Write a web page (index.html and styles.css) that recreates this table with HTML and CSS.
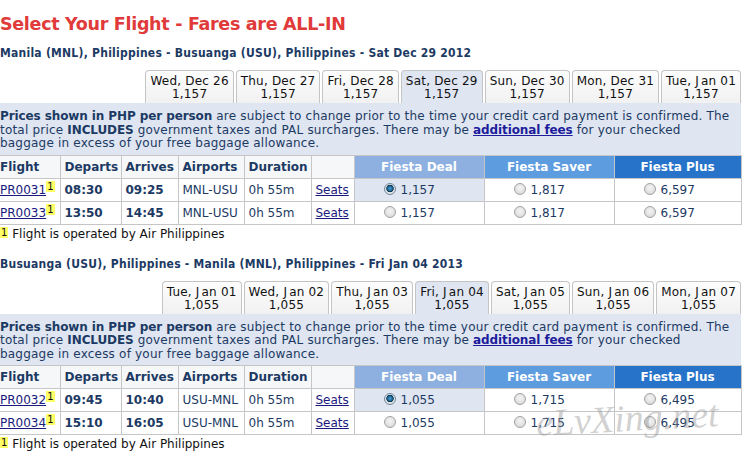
FILE: index.html
```html
<!DOCTYPE html>
<html>
<head>
<meta charset="utf-8">
<link rel="stylesheet" href="styles.css">
</head>
<body>
<div class="page">
  <h1 class="title">Select Your Flight - Fares are ALL-IN</h1>

  <section class="leg">
    <h2 class="route">Manila (MNL), Philippines - Busuanga (USU), Philippines - Sat Dec 29 2012</h2>
    <div class="tabs">
      <div class="tab"><span>Wed, Dec 26</span><span>1,157</span></div>
      <div class="tab"><span>Thu, Dec 27</span><span>1,157</span></div>
      <div class="tab"><span>Fri, Dec 28</span><span>1,157</span></div>
      <div class="tab tab-on"><span>Sat, Dec 29</span><span>1,157</span></div>
      <div class="tab"><span>Sun, Dec 30</span><span>1,157</span></div>
      <div class="tab"><span>Mon, Dec 31</span><span>1,157</span></div>
      <div class="tab"><span>Tue, <span class="j">J</span>an 01</span><span>1,157</span></div>
    </div>
    <div class="info"><b>Prices shown in PHP per person</b> are subject to change prior to the time your credit card payment is confirmed. The<br>total price <b>INCLUDES</b> government taxes and PAL surcharges. There may be <a class="fees" href="#">additional fees</a> for your checked<br>baggage in excess of your free baggage allowance.</div>
    <table class="flights">
      <colgroup>
        <col class="c-flight"><col class="c-dep"><col class="c-arr"><col class="c-apt"><col class="c-dur"><col class="c-seat"><col class="c-fare"><col class="c-fare"><col class="c-fare2">
      </colgroup>
      <thead>
        <tr>
          <th class="first">Flight</th><th>Departs</th><th>Arrives</th><th>Airports</th><th>Duration</th><th></th>
          <th class="fd">Fiesta Deal</th><th class="fs">Fiesta Saver</th><th class="fp">Fiesta Plus</th>
        </tr>
      </thead>
      <tbody>
        <tr>
          <td class="first"><a href="#">PR0031</a><sup class="op">1</sup></td><td class="time">08:30</td><td class="time">09:25</td><td>MNL-USU</td><td>0h 55m</td><td><a href="#">Seats</a></td>
          <td class="fare sel"><span class="radio on"></span>1,157</td><td class="fare"><span class="radio"></span>1,817</td><td class="fare"><span class="radio"></span>6,597</td>
        </tr>
        <tr>
          <td class="first"><a href="#">PR0033</a><sup class="op">1</sup></td><td class="time">13:50</td><td class="time">14:45</td><td>MNL-USU</td><td>0h 55m</td><td><a href="#">Seats</a></td>
          <td class="fare"><span class="radio"></span>1,157</td><td class="fare"><span class="radio"></span>1,817</td><td class="fare"><span class="radio"></span>6,597</td>
        </tr>
      </tbody>
    </table>
    <p class="note"><sup class="op">1</sup> Flight is operated by Air Philippines</p>
  </section>

  <section class="leg leg2">
    <h2 class="route">Busuanga (USU), Philippines - Manila (MNL), Philippines - Fri Jan 04 2013</h2>
    <div class="tabs">
      <div class="tab"><span>Tue, <span class="j">J</span>an 01</span><span>1,055</span></div>
      <div class="tab"><span>Wed, <span class="j">J</span>an 02</span><span>1,055</span></div>
      <div class="tab"><span>Thu, <span class="j">J</span>an 03</span><span>1,055</span></div>
      <div class="tab tab-on"><span>Fri, <span class="j">J</span>an 04</span><span>1,055</span></div>
      <div class="tab"><span>Sat, <span class="j">J</span>an 05</span><span>1,055</span></div>
      <div class="tab"><span>Sun, <span class="j">J</span>an 06</span><span>1,055</span></div>
      <div class="tab"><span>Mon, <span class="j">J</span>an 07</span><span>1,055</span></div>
    </div>
    <div class="info"><b>Prices shown in PHP per person</b> are subject to change prior to the time your credit card payment is confirmed. The<br>total price <b>INCLUDES</b> government taxes and PAL surcharges. There may be <a class="fees" href="#">additional fees</a> for your checked<br>baggage in excess of your free baggage allowance.</div>
    <table class="flights">
      <colgroup>
        <col class="c-flight"><col class="c-dep"><col class="c-arr"><col class="c-apt"><col class="c-dur"><col class="c-seat"><col class="c-fare"><col class="c-fare"><col class="c-fare2">
      </colgroup>
      <thead>
        <tr>
          <th class="first">Flight</th><th>Departs</th><th>Arrives</th><th>Airports</th><th>Duration</th><th></th>
          <th class="fd">Fiesta Deal</th><th class="fs">Fiesta Saver</th><th class="fp">Fiesta Plus</th>
        </tr>
      </thead>
      <tbody>
        <tr>
          <td class="first"><a href="#">PR0032</a><sup class="op">1</sup></td><td class="time">09:45</td><td class="time">10:40</td><td>USU-MNL</td><td>0h 55m</td><td><a href="#">Seats</a></td>
          <td class="fare sel"><span class="radio on"></span>1,055</td><td class="fare"><span class="radio"></span>1,715</td><td class="fare"><span class="radio"></span>6,495</td>
        </tr>
        <tr>
          <td class="first"><a href="#">PR0034</a><sup class="op">1</sup></td><td class="time">15:10</td><td class="time">16:05</td><td>USU-MNL</td><td>0h 55m</td><td><a href="#">Seats</a></td>
          <td class="fare"><span class="radio"></span>1,055</td><td class="fare"><span class="radio"></span>1,715</td><td class="fare"><span class="radio"></span>6,495</td>
        </tr>
      </tbody>
    </table>
    <p class="note"><sup class="op">1</sup> Flight is operated by Air Philippines</p>
  </section>

  <div class="watermark">eLvXing.net</div>
</div>
</body>
</html>
```
FILE: styles.css
```css
html, body {
  margin: 0;
  padding: 0;
  background: #ffffff;
}
body {
  font-family: "DejaVu Sans", Verdana, sans-serif;
  font-size: 12px;
  color: #1c3a63;
}
.page {
  position: relative;
  width: 753px;
  height: 458px;
  overflow: hidden;
}
.leg {
  width: 741px;
}
.title {
  margin: 13px 0 0 0;
  font-size: 17.5px;
  line-height: 22px;
  font-weight: bold;
  letter-spacing: -0.3px;
  color: #e03a3a;
  white-space: nowrap;
}
.route {
  margin: 11px 0 0 0;
  font-family: "DejaVu Sans Condensed", "DejaVu Sans", sans-serif;
  font-stretch: condensed;
  font-size: 12px;
  line-height: 15px;
  font-weight: bold;
  letter-spacing: 0.25px;
  color: #1c3a63;
  white-space: nowrap;
}
.leg2 .route {
  margin-top: 15px;
}
.tabs {
  display: flex;
  justify-content: flex-end;
  gap: 2px;
  margin-top: 9px;
}
.tab {
  display: flex;
  flex-direction: column;
  align-items: center;
  padding: 4px 4px 2px 4px;
  border: 1px solid #c4c4c4;
  border-bottom: none;
  border-radius: 4px 4px 0 0;
  background: linear-gradient(#fdfdfd, #f1f1f1);
  color: #111;
  line-height: 13px;
  letter-spacing: 0.2px;
  white-space: nowrap;
}
.tab .j {
  letter-spacing: 2.2px;
}
.tab-on {
  background: #dfe5f1;
}
.info {
  background: #dfe5f1;
  padding: 7px 0 4px 0;
  line-height: 13.5px;
  letter-spacing: 0.2px;
  color: #1c3a63;
  white-space: nowrap;
}
.info b {
  font-weight: bold;
  letter-spacing: -0.1px;
}
.fees {
  color: #1d1d9b;
  font-weight: bold;
  letter-spacing: -0.1px;
}
.flights {
  width: 741px;
  table-layout: fixed;
  border-collapse: collapse;
}
.c-flight { width: 60px; }
.c-dep { width: 61px; }
.c-arr { width: 57px; }
.c-apt { width: 66px; }
.c-dur { width: 67px; }
.c-seat { width: 43px; }
.c-fare { width: 130px; }
.c-fare2 { width: 127px; }
.flights th,
.flights td {
  border: 1px solid #c6c6c6;
  padding: 0 0 0 4px;
  height: 22px;
  text-align: left;
  white-space: nowrap;
}
.flights th {
  font-weight: bold;
  background: #f6f7f9;
  color: #1c3a63;
}
.flights .first {
  padding-left: 0;
  border-left: none;
}
.flights th.fd,
.flights th.fs,
.flights th.fp {
  color: #ffffff;
  text-align: center;
  padding: 0;
}
.fd { background: #8db0e0 !important; }
.fs { background: #5e9ce0 !important; }
.fp { background: #2673c9 !important; }
.flights td.time {
  font-weight: bold;
}
.flights a {
  color: #1a1a7e;
}
.op {
  display: inline-block;
  vertical-align: top;
  font-size: 10px;
  line-height: 11px;
  background: #ffff66;
  color: #111;
  padding: 0 1px;
  margin-top: -2px;
}
.flights td.fare {
  padding-left: 29px;
  background: #ffffff;
}
.flights td.fare.sel {
  background: #dfe5f1;
}
.radio {
  display: inline-block;
  width: 10px;
  height: 10px;
  border: 1px solid #a3a3a3;
  border-radius: 50%;
  background: radial-gradient(circle at 50% 40%, #f4f4f4 0%, #dedede 70%, #cfcfcf 100%);
  vertical-align: -1px;
  margin-right: 5px;
  box-sizing: content-box;
}
.radio.on {
  background: radial-gradient(circle at 50% 45%, #4aa3d8 0%, #1a5f8e 35%, #0c2f4a 45%, #e6e6e6 55%, #d6d6d6 100%);
  border-color: #6d8aa0;
}
.note {
  margin: 2px 0 0 0;
  line-height: 15px;
  color: #111;
}
.note .op {
  margin-top: 0;
}
.watermark {
  position: absolute;
  left: 536px;
  top: 396px;
  font-family: "Liberation Serif", serif;
  font-style: italic;
  font-size: 38px;
  color: rgba(150, 150, 150, 0.45);
  transform: rotate(-3deg);
  white-space: nowrap;
}
```
